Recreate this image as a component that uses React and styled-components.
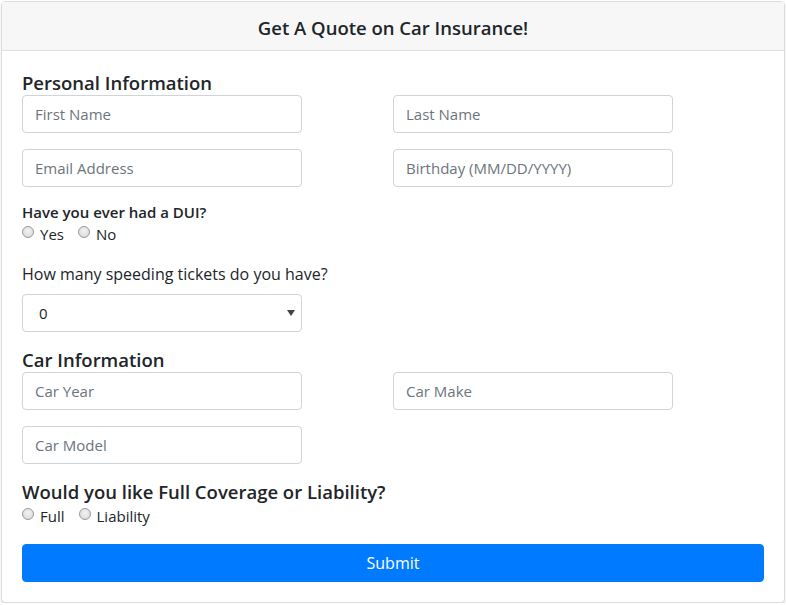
import React, { useState } from 'react'
import styled, { createGlobalStyle } from 'styled-components'

const Global = createGlobalStyle`
  * { box-sizing: border-box; }
  body {
    margin: 0;
    background: #fff;
    font-family: "Open Sans", "Noto Sans", sans-serif;
    color: #212529;
  }
`

function Radio({ name, label, value, checked, onChange }) {
  return (
    <Check>
      <RadioInput type="radio" name={name} value={value} checked={checked} onChange={onChange} />
      <CheckLabel>{label}</CheckLabel>
    </Check>
  )
}

function App() {
  const [dui, setDui] = useState('')
  const [coverage, setCoverage] = useState('')
  const [tickets, setTickets] = useState('0')

  return (
    <>
      <Global />
      <Card>
        <Header>Get A Quote on Car Insurance!</Header>
        <Body>
          <Heading>Personal Information</Heading>
          <Row>
            <Input placeholder="First Name" />
            <Input placeholder="Last Name" />
          </Row>
          <Row>
            <Input placeholder="Email Address" />
            <Input placeholder="Birthday (MM/DD/YYYY)" />
          </Row>

          <Question>Have you ever had a DUI?</Question>
          <Radios>
            <Radio name="dui" label="Yes" value="yes" checked={dui === 'yes'} onChange={e => setDui(e.target.value)} />
            <Radio name="dui" label="No" value="no" checked={dui === 'no'} onChange={e => setDui(e.target.value)} />
          </Radios>

          <Label>How many speeding tickets do you have?</Label>
          <SelectWrap>
            <Select value={tickets} onChange={e => setTickets(e.target.value)}>
              <option value="0">0</option>
              <option value="1">1</option>
              <option value="2">2</option>
              <option value="3">3+</option>
            </Select>
            <Caret width="8" height="6" viewBox="0 0 8 6">
              <path d="M0 0h8L4 6z" fill="#444" />
            </Caret>
          </SelectWrap>

          <Heading>Car Information</Heading>
          <Row>
            <Input placeholder="Car Year" />
            <Input placeholder="Car Make" />
          </Row>
          <Row>
            <Input placeholder="Car Model" />
          </Row>

          <Heading>Would you like Full Coverage or Liability?</Heading>
          <Radios>
            <Radio name="cov" label="Full" value="full" checked={coverage === 'full'} onChange={e => setCoverage(e.target.value)} />
            <Radio name="cov" label="Liability" value="liability" checked={coverage === 'liability'} onChange={e => setCoverage(e.target.value)} />
          </Radios>

          <Button type="button">Submit</Button>
        </Body>
      </Card>
    </>
  )
}

export default App

const Card = styled.div`
  margin: 1px 1px 0 1px;
  border: 1px solid #dcdcdc;
  border-radius: 4px;
  background: #fff;
  box-shadow: 0 2px 2px rgba(0, 0, 0, 0.12);
`

const Header = styled.div`
  height: 49px;
  background: #f7f7f7;
  border-bottom: 1px solid #dedede;
  display: flex;
  align-items: center;
  justify-content: center;
  font-size: 18.5px;
  font-weight: 600;
  color: #212529;
  padding-top: 2px;
`

const Body = styled.div`
  padding: 20px;
`

const Heading = styled.h5`
  margin: 0;
  font-size: 18.5px;
  font-weight: 600;
  line-height: 24px;
  color: #212529;
`

const Row = styled.div`
  display: grid;
  grid-template-columns: 371px 371px;
  margin-bottom: 16px;
`

const Input = styled.input`
  width: 280px;
  height: 38px;
  padding: 6px 12px;
  border: 1px solid #ced4da;
  border-radius: 4px;
  font-family: inherit;
  font-size: 15px;
  color: #495057;
  outline: none;
  &::placeholder { color: #6c757d; }
`

const Question = styled.div`
  font-size: 15px;
  font-weight: 600;
  line-height: 19px;
`

const Radios = styled.div`
  display: flex;
  align-items: center;
  height: 24px;
  margin-bottom: 16px;
`

const Check = styled.label`
  display: flex;
  align-items: center;
  margin-right: 14px;
  font-size: 15px;
  line-height: 22px;
`

const RadioInput = styled.input`
  appearance: none;
  width: 12px;
  height: 12px;
  margin: 0 6px 0 0;
  border: 1px solid #9a9a9a;
  border-radius: 50%;
  background: radial-gradient(circle at 50% 40%, #f2f2f2 0%, #d6d6d6 100%);
  position: relative;
  top: -2px;
  &:checked {
    background: radial-gradient(circle, #333 0 3px, #e8e8e8 3.5px);
  }
`

const CheckLabel = styled.span``

const Label = styled.div`
  font-size: 16px;
  line-height: 24px;
  margin-bottom: 8px;
`

const SelectWrap = styled.div`
  position: relative;
  width: 280px;
  margin-bottom: 16px;
`

const Select = styled.select`
  appearance: none;
  width: 100%;
  height: 38px;
  padding: 6px 16px;
  border: 1px solid #ced4da;
  border-radius: 4px;
  background: #fff;
  font-family: inherit;
  font-size: 15px;
  color: #212529;
  outline: none;
`

const Caret = styled.svg`
  position: absolute;
  right: 7px;
  top: 16px;
  pointer-events: none;
`

const Button = styled.button`
  display: block;
  width: 742px;
  height: 38px;
  border: 1px solid #007bff;
  border-radius: 4px;
  background: #007bff;
  color: #fff;
  font-family: inherit;
  font-size: 16px;
  cursor: pointer;
`
